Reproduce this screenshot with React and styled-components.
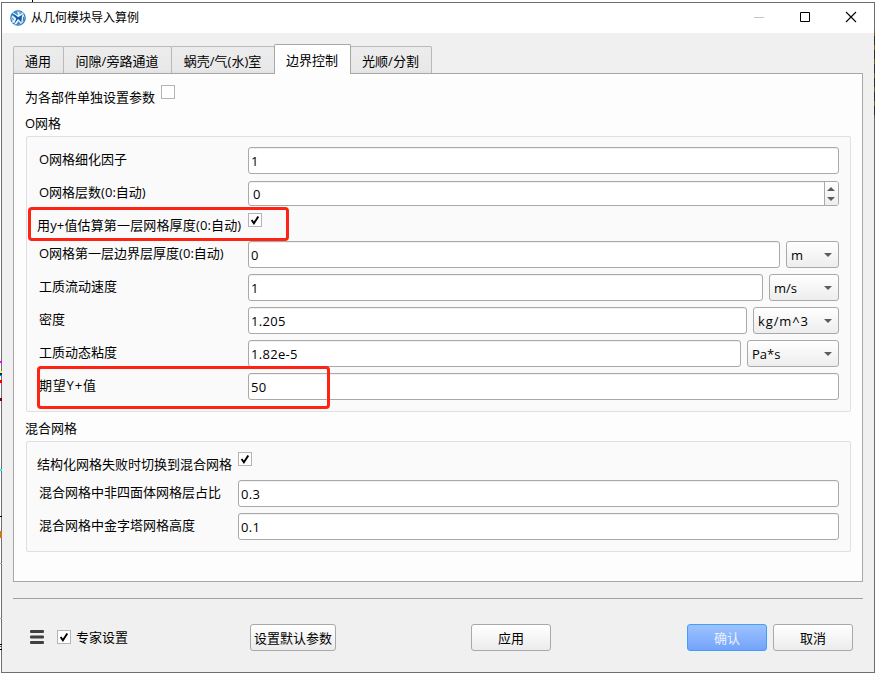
import styled, { createGlobalStyle, css } from "styled-components";

const GlobalStyle = createGlobalStyle`
  * {
    box-sizing: border-box;
  }
  body {
    margin: 0;
    background: #fff;
    color: #000;
    font: 13px/18px "Open Sans", "Noto Sans CJK SC", sans-serif;
    overflow: hidden;
  }
`;

const Desktop = styled.div`
  position: relative;
  width: 875px;
  height: 674px;
  padding: 2px 0 1px 1px;
`;

const Backdrop = styled.svg`
  position: absolute;
  top: 0;
  left: 0;
  pointer-events: none;
`;

const Window = styled.div`
  display: flex;
  flex-direction: column;
  height: 671px;
  border: 1px solid #6e6e6e;
  background: #f0f0f0;
`;

const TitleBar = styled.header`
  display: flex;
  align-items: center;
  height: 30px;
  padding: 0 17px 0 8px;
  background: #fff;
  font-size: 12px;
`;

const Title = styled.span`
  flex: 1;
  margin-left: 5px;
  padding-bottom: 1px;
`;

const WindowButtons = styled.div`
  display: flex;
  gap: 34px;
  padding-bottom: 2px;
`;

const Tabs = styled.nav`
  display: flex;
  align-items: flex-end;
  height: 40px;
  margin: 0 11px;
`;

const Tab = styled.div`
  display: flex;
  align-items: center;
  justify-content: center;
  width: ${(p) => p.$width}px;
  height: 27px;
  margin-left: -1px;
  padding: 1px 1px 0 0;
  border: 1px solid #b9b9b9;
  border-bottom: none;
  border-radius: 2px 2px 0 0;
  background: linear-gradient(#ececec, #e9e9e9 85%, #e1e1e1);
  white-space: nowrap;
  &:first-child {
    margin-left: 0;
  }
  ${(p) =>
    p.$active &&
    css`
      position: relative;
      z-index: 1;
      height: 30px;
      margin-bottom: -1px;
      border-color: #a8a8a8;
      background: linear-gradient(#fff, #fdfdfd);
    `}
`;

const Pane = styled.main`
  height: 509px;
  margin: 0 11px;
  padding: 11px 11px 0;
  border: 1px solid #a8a8a8;
  background: #fdfdfd;
`;

const CheckRow = styled.div`
  display: flex;
  align-items: flex-start;
  height: 22px;
`;

const CheckLabel = styled.span`
  width: ${(p) => p.$width}px;
  padding-top: 3px;
  letter-spacing: ${(p) => p.$track || 0}px;
  white-space: nowrap;
`;

const Box = styled.span`
  display: flex;
  flex: none;
  width: 14px;
  height: 14px;
  border: 1px solid #b4b4b4;
  background: #fff;
`;

const GroupTitle = styled.div`
  height: 18px;
  margin: 7px 0 4px;
`;

const Group = styled.section`
  display: flex;
  flex-direction: column;
  gap: 6px;
  height: ${(p) => p.$height}px;
  margin-left: 1px;
  padding: 10px 11px 0 10px;
  border: 1px solid #e0e0e0;
  border-radius: 2px;
  background: #fafafa;
`;

const Row = styled.div`
  display: flex;
  align-items: center;
  gap: 6px;
  height: 27px;
  padding-left: 2px;
`;

const Label = styled.label`
  flex: none;
  width: ${(p) => p.$width}px;
  padding-bottom: 3px;
  letter-spacing: ${(p) => p.$track || 0}px;
  white-space: nowrap;
`;

const Field = styled.div`
  display: flex;
  flex: 1;
  align-items: center;
  height: 27px;
  padding: 1px 0 0 2px;
  border: 1px solid #a9a9a9;
  border-radius: 3px;
  background: #fff;
  box-shadow: inset 0 1px 0 #f1f1f1;
  letter-spacing: 0.3px;
`;

const Spin = styled(Field)`
  height: 25px;
  padding: 0 0 0 4px;
  justify-content: space-between;
`;

const Stepper = styled.span`
  display: flex;
  flex-direction: column;
  align-items: center;
  justify-content: center;
  gap: 6px;
  width: 14px;
  height: 23px;
  padding-right: 1px;
  border-left: 1px solid #a9a9a9;
  border-radius: 0 2px 2px 0;
  background: linear-gradient(#fff, #eee);
`;

const Select = styled.div`
  display: flex;
  align-items: center;
  justify-content: space-between;
  width: ${(p) => p.$width}px;
  height: 27px;
  padding: 1px 6px 0 4px;
  border: 1px solid #a9a9a9;
  border-radius: 3px;
  background: linear-gradient(#fff, #ededed);
  letter-spacing: ${(p) => p.$track || 0}px;
  svg {
    margin-bottom: 1px;
  }
`;

const Footer = styled.footer`
  display: flex;
  align-items: center;
  height: 74px;
  margin: 16px 11px 0;
  padding: 3px 10px 0 17px;
  border-top: 1px solid #a0a0a0;
`;

const Expert = styled.span`
  display: flex;
  align-items: center;
  width: 220px;
  gap: 5px;
  svg {
    display: block;
  }
  > svg {
    margin-right: 8px;
  }
`;

const Button = styled.button`
  width: ${(p) => p.$width || 80}px;
  height: 27px;
  margin-left: ${(p) => p.$gap || 0}px;
  padding: 1px 0 0;
  border: 1px solid #a9a9a9;
  border-radius: 3px;
  background: linear-gradient(#fff, #ececec);
  color: #000;
  font: inherit;
  white-space: nowrap;
  ${(p) =>
    p.$primary &&
    css`
      border-color: #3ea0fa;
      background: linear-gradient(#9dc2ff, #73a3fa);
      color: #eaf2ff;
    `}
`;

const Highlight = styled.div`
  position: absolute;
  z-index: 2;
  top: ${(p) => p.$top}px;
  left: ${(p) => p.$left}px;
  width: ${(p) => p.$width}px;
  height: ${(p) => p.$height}px;
  border: 3px solid #ff2314;
  border-radius: 4px;
`;

const Logo = () => (
  <svg width="16" height="16" viewBox="0 0 16 16">
    <circle cx="8" cy="8" r="7.2" fill="#e4f1fb" stroke="#2b78bd" strokeWidth="1.2" />
    <path d="M1 5Q3 1 7 .8L8 5 5 7Z" fill="#3f95d4" />
    <path d="M2 3.6 8.4 7 12.8 4.4 11.8 13 8.8 9.6 4 14 6.2 8.8Z" fill="#1b5ba3" />
    <path d="M9 1 14.5 3.5 9.6 5.6Z" fill="#5fb0e4" />
    <path d="M13 6 15 9 12.4 13.2Z" fill="#3287cb" />
    <path d="M1.6 7 4.6 9.2 3 12Z" fill="#5fb0e4" />
    <path d="M8.4 11.2 11 14.2 6 15Z" fill="#3287cb" />
    <path
      d="M2.6 2.6 8 6.2 13.4 2.8M8.2 9.4 4.8 14.6M5.6 8.2 2.4 12.6M12.6 5.4 11.8 12.8"
      fill="none"
      stroke="#fff"
      strokeWidth="1"
    />
  </svg>
);

const Arrow = ({ up }) => (
  <svg width="8" height="4" viewBox="0 0 8 4">
    <path d={up ? "M0 4 4 0 8 4Z" : "M0 0H8L4 4Z"} fill="#5c5c5c" />
  </svg>
);

const CheckBox = ({ checked }) => (
  <Box>
    {checked && (
      <svg width="12" height="12" viewBox="0 0 12 12" fill="none">
        <path d="M2.6 6 4.9 9.3 9.3 2.4" stroke="#000" strokeWidth="1.9" />
      </svg>
    )}
  </Box>
);

// slivers of the windows behind, as [y, height, colour]
const leftMarks = [
  [361, 2, "#f0f"],
  [371, 2, "#ff0"],
  [373, 2, "#00f"],
  [375, 1, "#0a5"],
  [380, 3, "#f00"],
  [398, 3, "#800000"],
  [469, 2, "#0ff"],
  [516, 1, "#000"],
  [531, 7, "#c8781e"],
  [563, 1, "#aaa"],
  [618, 1, "#aaa"],
  [644, 1, "#000"],
  [646, 1, "#555"],
  [649, 1, "#000"],
];

const tabs = [
  { name: "通用", width: 51 },
  { name: "间隙/旁路通道", width: 109 },
  { name: "蜗壳/气(水)室", width: 104 },
  { name: "边界控制", width: 77, active: true },
  { name: "光顺/分割", width: 82 },
];

const params = [
  { label: "O网格第一层边界层厚度(0:自动)", value: "0", unit: "m", width: 53 },
  { label: "工质流动速度", value: "1", unit: "m/s", width: 70 },
  { label: "密度", value: "1.205", unit: "kg/m^3", width: 86, unitTrack: 0.9 },
  { label: "工质动态粘度", value: "1.82e-5", unit: "Pa*s", width: 92 },
  { label: "期望Y+值", value: "50", track: 0.8 },
];

const ParamRow = ({ label, value, unit, width, track, unitTrack, labelWidth = 203 }) => (
  <Row>
    <Label $width={labelWidth} $track={track}>
      {label}
    </Label>
    <Field>{value}</Field>
    {unit && (
      <Select $width={width} $track={unitTrack}>
        {unit}
        <Arrow />
      </Select>
    )}
  </Row>
);

const App = () => (
  <Desktop>
    <GlobalStyle />
    <Window>
      <TitleBar>
        <Logo />
        <Title>从几何模块导入算例</Title>
        <WindowButtons>
          <svg width="12" height="12">
            <path d="M1 6.5H11" stroke="#c4c4c4" />
          </svg>
          <svg width="12" height="12">
            <path d="M1.5 1.5H10.5V10.5H1.5Z" fill="none" stroke="#000" />
          </svg>
          <svg width="12" height="12">
            <path d="M1 1 11 11M11 1 1 11" stroke="#000" strokeWidth="1.1" />
          </svg>
        </WindowButtons>
      </TitleBar>
      <Tabs>
        {tabs.map((t) => (
          <Tab key={t.name} $width={t.width} $active={t.active}>
            {t.name}
          </Tab>
        ))}
      </Tabs>
      <Pane>
        <CheckRow>
          <CheckLabel $width={136}>为各部件单独设置参数</CheckLabel>
          <CheckBox />
        </CheckRow>
        <GroupTitle>O网格</GroupTitle>
        <Group $height={276}>
          <ParamRow label="O网格细化因子" value="1" />
          <Row>
            <Label $width={203}>O网格层数(0:自动)</Label>
            <Spin>
              0
              <Stepper>
                <Arrow up />
                <Arrow />
              </Stepper>
            </Spin>
          </Row>
          <CheckRow>
            <CheckLabel $width={211} $track={0.15}>
              用y+值估算第一层网格厚度(0:自动)
            </CheckLabel>
            <CheckBox checked />
          </CheckRow>
          {params.map((p) => (
            <ParamRow key={p.label} {...p} />
          ))}
        </Group>
        <GroupTitle>混合网格</GroupTitle>
        <Group $height={111}>
          <CheckRow>
            <CheckLabel $width={201}>结构化网格失败时切换到混合网格</CheckLabel>
            <CheckBox checked />
          </CheckRow>
          <ParamRow labelWidth={193} label="混合网格中非四面体网格层占比" value="0.3" />
          <ParamRow labelWidth={193} label="混合网格中金字塔网格高度" value="0.1" />
        </Group>
      </Pane>
      <Footer>
        <Expert>
          <svg width="14" height="14" fill="#404040">
            <rect width="14" height="3" rx="1" />
            <rect y="5.5" width="14" height="3" rx="1" />
            <rect y="11" width="14" height="3" rx="1" />
          </svg>
          <CheckBox checked />
          专家设置
        </Expert>
        <Button $width={86}>设置默认参数</Button>
        <Button $gap={135}>应用</Button>
        <Button $gap={136} $primary>
          确认
        </Button>
        <Button $gap={6}>取消</Button>
      </Footer>
    </Window>
    <Backdrop width="875" height="674">
      <rect x="32" width="1" height="2" />
      {leftMarks.map(([y, height, fill]) => (
        <rect key={y} y={y} width="2" height={height} fill={fill} />
      ))}
      <rect x="874" y="31" width="1" height="87" fill="#2b3034" />
      <path d="M874.5 31V118" stroke="#7a5c14" strokeDasharray="5 9" />
    </Backdrop>
    <Highlight $top={207} $left={28} $width={261} $height={34} />
    <Highlight $top={366} $left={37} $width={293} $height={43} />
  </Desktop>
);

export default App;
